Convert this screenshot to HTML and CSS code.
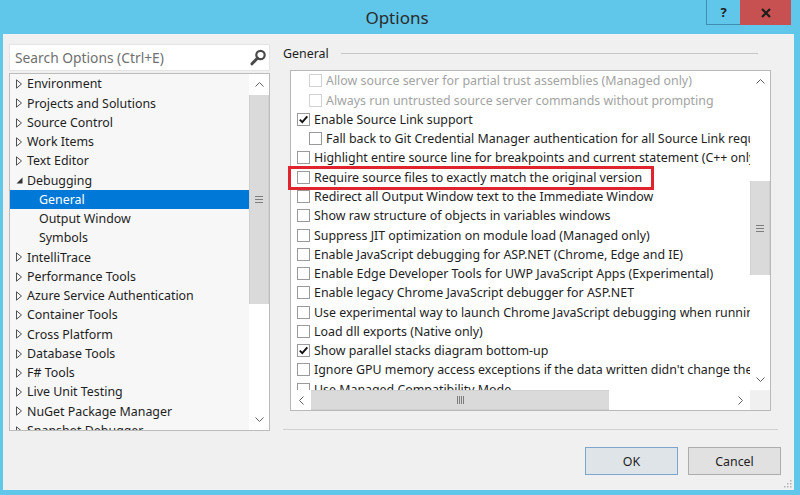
FILE: index.html
```html
<!DOCTYPE html>
<html>
<head>
<meta charset="utf-8">
<title>Options</title>
<link rel="stylesheet" href="styles.css">
</head>
<body>
<div class="window">
  <div class="titlebar">
    <div></div>
    <div class="title">Options</div>
    <div class="caption">
      <div class="cap-help">?</div>
      <div class="cap-close">
        <svg width="10" height="10" viewBox="0 0 10 10"><path d="M1 1 L9 9 M9 1 L1 9" stroke="#1d1d1d" stroke-width="2.2" fill="none"/></svg>
      </div>
    </div>
  </div>

  <div class="client">
    <div class="left">
      <div class="search">
        <span class="placeholder">Search Options (Ctrl+E)</span>
        <svg class="magnifier" width="18" height="18" viewBox="0 0 18 18">
          <circle cx="11.5" cy="6" r="4.2" stroke="#4a4a4a" stroke-width="2.2" fill="none"/>
          <path d="M8.6 9 L3 14.8" stroke="#4a4a4a" stroke-width="3" stroke-linecap="round"/>
        </svg>
      </div>

      <div class="tree">
        <div class="tree-items">
          <div class="tree-item"><span class="exp"><svg width="7" height="10" viewBox="0 0 7 10"><path d="M0.5 0.8 L5.5 5 L0.5 9.2 Z" stroke="#505050" fill="none"/></svg></span>Environment</div>
          <div class="tree-item"><span class="exp"><svg width="7" height="10" viewBox="0 0 7 10"><path d="M0.5 0.8 L5.5 5 L0.5 9.2 Z" stroke="#505050" fill="none"/></svg></span>Projects and Solutions</div>
          <div class="tree-item"><span class="exp"><svg width="7" height="10" viewBox="0 0 7 10"><path d="M0.5 0.8 L5.5 5 L0.5 9.2 Z" stroke="#505050" fill="none"/></svg></span>Source Control</div>
          <div class="tree-item"><span class="exp"><svg width="7" height="10" viewBox="0 0 7 10"><path d="M0.5 0.8 L5.5 5 L0.5 9.2 Z" stroke="#505050" fill="none"/></svg></span>Work Items</div>
          <div class="tree-item"><span class="exp"><svg width="7" height="10" viewBox="0 0 7 10"><path d="M0.5 0.8 L5.5 5 L0.5 9.2 Z" stroke="#505050" fill="none"/></svg></span>Text Editor</div>
          <div class="tree-item"><span class="exp"><svg width="7" height="10" viewBox="0 0 7 10"><path d="M6.5 2.5 L6.5 8.5 L0.5 8.5 Z" fill="#333"/></svg></span>Debugging</div>
          <div class="tree-item child selected">General</div>
          <div class="tree-item child">Output Window</div>
          <div class="tree-item child">Symbols</div>
          <div class="tree-item"><span class="exp"><svg width="7" height="10" viewBox="0 0 7 10"><path d="M0.5 0.8 L5.5 5 L0.5 9.2 Z" stroke="#505050" fill="none"/></svg></span>IntelliTrace</div>
          <div class="tree-item"><span class="exp"><svg width="7" height="10" viewBox="0 0 7 10"><path d="M0.5 0.8 L5.5 5 L0.5 9.2 Z" stroke="#505050" fill="none"/></svg></span>Performance Tools</div>
          <div class="tree-item"><span class="exp"><svg width="7" height="10" viewBox="0 0 7 10"><path d="M0.5 0.8 L5.5 5 L0.5 9.2 Z" stroke="#505050" fill="none"/></svg></span>Azure Service Authentication</div>
          <div class="tree-item"><span class="exp"><svg width="7" height="10" viewBox="0 0 7 10"><path d="M0.5 0.8 L5.5 5 L0.5 9.2 Z" stroke="#505050" fill="none"/></svg></span>Container Tools</div>
          <div class="tree-item"><span class="exp"><svg width="7" height="10" viewBox="0 0 7 10"><path d="M0.5 0.8 L5.5 5 L0.5 9.2 Z" stroke="#505050" fill="none"/></svg></span>Cross Platform</div>
          <div class="tree-item"><span class="exp"><svg width="7" height="10" viewBox="0 0 7 10"><path d="M0.5 0.8 L5.5 5 L0.5 9.2 Z" stroke="#505050" fill="none"/></svg></span>Database Tools</div>
          <div class="tree-item"><span class="exp"><svg width="7" height="10" viewBox="0 0 7 10"><path d="M0.5 0.8 L5.5 5 L0.5 9.2 Z" stroke="#505050" fill="none"/></svg></span>F# Tools</div>
          <div class="tree-item"><span class="exp"><svg width="7" height="10" viewBox="0 0 7 10"><path d="M0.5 0.8 L5.5 5 L0.5 9.2 Z" stroke="#505050" fill="none"/></svg></span>Live Unit Testing</div>
          <div class="tree-item"><span class="exp"><svg width="7" height="10" viewBox="0 0 7 10"><path d="M0.5 0.8 L5.5 5 L0.5 9.2 Z" stroke="#505050" fill="none"/></svg></span>NuGet Package Manager</div>
          <div class="tree-item"><span class="exp"><svg width="7" height="10" viewBox="0 0 7 10"><path d="M0.5 0.8 L5.5 5 L0.5 9.2 Z" stroke="#505050" fill="none"/></svg></span>Snapshot Debugger</div>
        </div>
        <div class="vscroll tree-scroll">
          <div class="sb-btn"><svg width="9" height="5" viewBox="0 0 9 5"><path d="M0.5 4.5 L4.5 0.5 L8.5 4.5" stroke="#606060" fill="none"/></svg></div>
          <div class="thumb-v tree-thumb"><span class="grip-v"></span></div>
          <div class="track"></div>
          <div class="sb-btn sb-down"><svg width="9" height="5" viewBox="0 0 9 5"><path d="M0.5 0.5 L4.5 4.5 L8.5 0.5" stroke="#606060" fill="none"/></svg></div>
        </div>
      </div>
    </div>

    <div class="right">
      <div class="header">
        <span>General</span>
        <div class="rule"></div>
      </div>

      <div class="listbox">
        <div class="lb-main">
          <div class="lb-rows">
            <div class="opt indent disabled"><span class="cb"></span>Allow source server for partial trust assemblies (Managed only)</div>
            <div class="opt indent disabled"><span class="cb"></span>Always run untrusted source server commands without prompting</div>
            <div class="opt"><span class="cb"><svg width="11" height="11" viewBox="0 0 11 11"><path d="M1.8 5.6 L4.3 8.2 L9.3 2.4" stroke="#111" stroke-width="1.9" fill="none"/></svg></span>Enable Source Link support</div>
            <div class="opt indent"><span class="cb"></span>Fall back to Git Credential Manager authentication for all Source Link requests</div>
            <div class="opt"><span class="cb"></span>Highlight entire source line for breakpoints and current statement (C++ only)</div>
            <div class="opt"><span class="cb"></span>Require source files to exactly match the original version</div>
            <div class="opt"><span class="cb"></span>Redirect all Output Window text to the Immediate Window</div>
            <div class="opt"><span class="cb"></span>Show raw structure of objects in variables windows</div>
            <div class="opt"><span class="cb"></span>Suppress JIT optimization on module load (Managed only)</div>
            <div class="opt"><span class="cb"></span>Enable JavaScript debugging for ASP.NET (Chrome, Edge and IE)</div>
            <div class="opt"><span class="cb"></span>Enable Edge Developer Tools for UWP JavaScript Apps (Experimental)</div>
            <div class="opt"><span class="cb"></span>Enable legacy Chrome JavaScript debugger for ASP.NET</div>
            <div class="opt"><span class="cb"></span>Use experimental way to launch Chrome JavaScript debugging when running in Visual Studio</div>
            <div class="opt"><span class="cb"></span>Load dll exports (Native only)</div>
            <div class="opt"><span class="cb"><svg width="11" height="11" viewBox="0 0 11 11"><path d="M1.8 5.6 L4.3 8.2 L9.3 2.4" stroke="#111" stroke-width="1.9" fill="none"/></svg></span>Show parallel stacks diagram bottom-up</div>
            <div class="opt"><span class="cb"></span>Ignore GPU memory access exceptions if the data written didn't change the value</div>
            <div class="opt"><span class="cb"></span>Use Managed Compatibility Mode</div>
          </div>
          <div class="vscroll lb-scroll">
            <div class="sb-btn"><svg width="9" height="5" viewBox="0 0 9 5"><path d="M0.5 4.5 L4.5 0.5 L8.5 4.5" stroke="#606060" fill="none"/></svg></div>
            <div class="track lb-track-top"></div>
            <div class="thumb-v lb-thumb"><span class="grip-v"></span></div>
            <div class="track"></div>
            <div class="sb-btn sb-down"><svg width="9" height="5" viewBox="0 0 9 5"><path d="M0.5 0.5 L4.5 4.5 L8.5 0.5" stroke="#606060" fill="none"/></svg></div>
          </div>
        </div>
        <div class="hscroll-row">
          <div class="hscroll">
            <div class="sb-btn-h"><svg width="5" height="9" viewBox="0 0 5 9"><path d="M4.5 0.5 L0.5 4.5 L4.5 8.5" stroke="#606060" fill="none"/></svg></div>
            <div class="thumb-h"><span class="grip-h"></span></div>
            <div class="track"></div>
            <div class="sb-btn-h"><svg width="5" height="9" viewBox="0 0 5 9"><path d="M0.5 0.5 L4.5 4.5 L0.5 8.5" stroke="#606060" fill="none"/></svg></div>
          </div>
          <div class="corner"></div>
        </div>
        <div class="annotation"></div>
      </div>

      <div class="separator"></div>

      <div class="buttons">
        <div class="btn btn-default">OK</div>
        <div class="btn">Cancel</div>
      </div>
    </div>

    <svg class="size-grip" width="8" height="8" viewBox="0 0 8 8">
      <rect x="6" y="0" width="1.5" height="1.5" fill="#b5b5b5"/>
      <rect x="3" y="3" width="1.5" height="1.5" fill="#b5b5b5"/>
      <rect x="6" y="3" width="1.5" height="1.5" fill="#b5b5b5"/>
      <rect x="0" y="6" width="1.5" height="1.5" fill="#b5b5b5"/>
      <rect x="3" y="6" width="1.5" height="1.5" fill="#b5b5b5"/>
      <rect x="6" y="6" width="1.5" height="1.5" fill="#b5b5b5"/>
    </svg>
  </div>
</div>
</body>
</html>
```

FILE: styles.css
```css
* { box-sizing: border-box; }

body {
  margin: 0;
  background: #60c6ea;
  font-family: "Noto Sans", "Open Sans", sans-serif;
  font-size: 12.4px;
  color: #1e1e1e;
}

.window {
  width: 800px;
  height: 495px;
  display: flex;
  flex-direction: column;
  overflow: hidden;
}

/* Title bar */
.titlebar {
  height: 34px;
  flex: none;
  display: grid;
  grid-template-columns: 1fr auto 1fr;
  align-items: start;
}

.title {
  font-size: 17px;
  color: #2b2b2b;
  line-height: 34px;
  padding-top: 1px;
  margin-right: 6px;
}

.caption {
  justify-self: end;
  display: flex;
  margin-right: 9px;
}

.cap-help {
  width: 34px;
  height: 25px;
  border-left: 1px solid #3e8db4;
  border-bottom: 1px solid #3e8db4;
  display: flex;
  align-items: center;
  justify-content: center;
  font-weight: bold;
  font-size: 13px;
  color: #1d1d1d;
}

.cap-close {
  width: 51px;
  height: 25px;
  background: #c75050;
  display: flex;
  align-items: center;
  justify-content: center;
}

/* Client area */
.client {
  position: relative;
  flex: none;
  height: 456px;
  margin: 0 6px 0 3px;
  background: #f0f0f0;
  display: flex;
}

.left {
  flex: none;
  width: 261px;
  margin-left: 6px;
  padding-top: 10px;
  display: flex;
  flex-direction: column;
}

.search {
  flex: none;
  height: 27px;
  background: #fff;
  border: 1px solid #e4e4e4;
  display: flex;
  align-items: center;
  padding-left: 5px;
}

.placeholder {
  flex: 1;
  font-size: 13.8px;
  color: #6f6f6f;
  white-space: nowrap;
}

.magnifier {
  margin-right: 2px;
}

.tree {
  flex: none;
  margin-top: 2px;
  height: 358px;
  border: 1px solid #bcbcbc;
  background: #f7f7f7;
  display: flex;
}

.tree-items {
  flex: 1;
  min-width: 0;
  overflow: hidden;
  padding-top: 0.4px;
}

.tree-item {
  height: 19.25px;
  line-height: 19.25px;
  display: flex;
  align-items: center;
  white-space: nowrap;
  padding-left: 6px;
}

.exp {
  width: 11px;
  display: inline-flex;
  align-items: center;
}

.tree-item.child {
  padding-left: 29px;
}

.tree-item.selected {
  background: #0078d7;
  color: #fff;
}

/* Scrollbars */
.vscroll {
  flex: none;
  width: 20px;
  display: flex;
  flex-direction: column;
  background: #fff;
}

.sb-btn {
  flex: none;
  height: 21px;
  display: flex;
  align-items: center;
  justify-content: center;
  background: #fff;
}

.sb-btn.sb-down {
  height: 22px;
}

.track {
  flex: 1;
  background: #fff;
}

.thumb-v {
  flex: none;
  background: #dadada;
  border-left: 1px solid #d0d0d0;
  border-right: 1px solid #d0d0d0;
  display: flex;
  align-items: center;
  justify-content: center;
}

.tree-thumb {
  height: 209px;
}

.grip-v {
  width: 8px;
  height: 7px;
  background: repeating-linear-gradient(to bottom, #7d7d7d 0, #7d7d7d 1px, transparent 1px, transparent 3px);
}

.tree-scroll {
  width: 20px;
}

/* Right pane */
.right {
  flex: 1;
  min-width: 0;
  margin-left: 13px;
  padding: 10px 16px 0 0;
  display: flex;
  flex-direction: column;
}

.header {
  flex: none;
  height: 18px;
  display: flex;
  align-items: center;
}

.rule {
  flex: 1;
  height: 1px;
  background: #c6c6c6;
  margin: 1px 20px 0 12px;
}

.listbox {
  position: relative;
  flex: none;
  margin: 8px 7px 0 7px;
  height: 341px;
  border: 1px solid #b9b9b9;
  background: #fff;
  display: flex;
  flex-direction: column;
}

.lb-main {
  flex: none;
  height: 319px;
  display: flex;
}

.lb-rows {
  flex: 1;
  min-width: 0;
  overflow: hidden;
  padding-top: 0.3px;
}

.opt {
  height: 19.27px;
  display: flex;
  align-items: center;
  white-space: nowrap;
  padding-left: 6px;
  gap: 4px;
}

.opt.indent {
  padding-left: 18px;
}

.cb {
  flex: none;
  width: 13px;
  height: 13px;
  border: 1px solid #9a9a9a;
  background: #fff;
  display: flex;
  align-items: center;
  justify-content: center;
}

.opt.disabled {
  color: #a3a3a3;
}

.opt.disabled .cb {
  border-color: #d2d2d2;
}

.lb-scroll .lb-track-top {
  flex: none;
  height: 89px;
}

.lb-thumb {
  height: 94px;
}

.hscroll-row {
  flex: none;
  height: 20px;
  display: flex;
}

.hscroll {
  flex: 1;
  min-width: 0;
  display: flex;
}

.sb-btn-h {
  flex: none;
  width: 20px;
  display: flex;
  align-items: center;
  justify-content: center;
}

.thumb-h {
  flex: none;
  width: 298px;
  background: #dadada;
  border-top: 1px solid #d0d0d0;
  border-bottom: 1px solid #d0d0d0;
  display: flex;
  align-items: center;
  justify-content: center;
}

.grip-h {
  width: 7px;
  height: 8px;
  background: repeating-linear-gradient(to right, #7d7d7d 0, #7d7d7d 1px, transparent 1px, transparent 2px);
}

.corner {
  flex: none;
  width: 20px;
  background: #f0f0f0;
}

.annotation {
  position: absolute;
  left: -3px;
  top: 95px;
  width: 366px;
  height: 24px;
  border: 3px solid #e0232d;
}

.separator {
  flex: none;
  margin-top: 18px;
  height: 1px;
  background: #cfcfcf;
}

.buttons {
  flex: none;
  margin-top: 17px;
  margin-right: -3px;
  display: flex;
  justify-content: flex-end;
  gap: 10px;
}

.btn {
  width: 93px;
  height: 28px;
  border: 1px solid #adadad;
  background: #e1e1e1;
  display: flex;
  align-items: center;
  justify-content: center;
}

.btn-default {
  border-color: #7ea6cc;
  background: #dfe4e9;
}

.size-grip {
  position: absolute;
  right: 2px;
  bottom: 2px;
}
```
